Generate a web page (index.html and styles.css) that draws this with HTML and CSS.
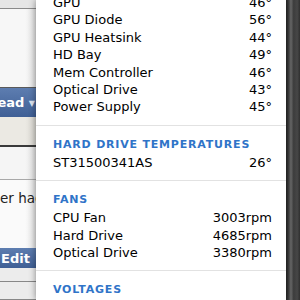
FILE: index.html
```html
<!DOCTYPE html>
<html lang="en">
<head>
    <meta charset="UTF-8">
    <meta name="viewport" content="width=device-width, initial-scale=1.0">
    <title>Temperature Monitor</title>
    <link rel="stylesheet" href="styles.css">
</head>
<body>
    <div class="page">
        <div class="page-top"></div>
        <div class="page-panel"></div>
        <div class="page-btn"><span>Thread <small>▼</small></span></div>
        <div class="page-strip"></div>
        <div class="page-head"></div>
        <div class="page-text">er had</div>
        <div class="page-btn small"><span>Edit</span></div>
        <div class="page-foot"></div>
        <div class="page-foot2"></div>
    </div>

    <div class="menu">
        <div class="menu-scroll">
            <div class="row"><span>GPU</span><span>46°</span></div>
            <div class="row"><span>GPU Diode</span><span>56°</span></div>
            <div class="row"><span>GPU Heatsink</span><span>44°</span></div>
            <div class="row"><span>HD Bay</span><span>49°</span></div>
            <div class="row"><span>Mem Controller</span><span>46°</span></div>
            <div class="row"><span>Optical Drive</span><span>43°</span></div>
            <div class="row"><span>Power Supply</span><span>45°</span></div>

            <div class="sep"></div>
            <div class="section">HARD DRIVE TEMPERATURES</div>
            <div class="row"><span>ST31500341AS</span><span>26°</span></div>

            <div class="sep"></div>
            <div class="section">FANS</div>
            <div class="row"><span>CPU Fan</span><span>3003rpm</span></div>
            <div class="row"><span>Hard Drive</span><span>4685rpm</span></div>
            <div class="row"><span>Optical Drive</span><span>3380rpm</span></div>

            <div class="sep"></div>
            <div class="section">VOLTAGES</div>
            <div class="row"><span>CPU A</span><span>0.98 V</span></div>
        </div>
    </div>

    <div class="desk"></div>
</body>
</html>
```

FILE: styles.css
```css
html, body {
    margin: 0;
    height: 100%;
    overflow: hidden;
}
body {
    display: flex;
    font-family: "DejaVu Sans", sans-serif;
    background: #3a3a3a;
}

/* page behind the menu */
.page {
    width: 36px;
    flex: none;
    display: flex;
    flex-direction: column;
    background: #f3f3f3;
    overflow: hidden;
}
.page-top {
    height: 8px;
    background: #e6e6e6;
    border-bottom: 1px solid #8a8a8a;
}
.page-panel {
    height: 78px;
    background: linear-gradient(to right, #f7f7f7 70%, #e2e2e2);
    border-bottom: 1px solid #5a5a5a;
}
.page-btn {
    height: 29px;
    display: flex;
    align-items: center;
    justify-content: flex-end;
    background: linear-gradient(#5d7db0, #3f5f95);
    color: white;
    font-weight: bold;
    font-size: 13px;
    white-space: nowrap;
    overflow: hidden;
}
.page-btn small {
    font-size: 8px;
    color: #dfe6f2;
    vertical-align: 1px;
}
.page-btn span {
    margin-right: 1px;
}
.page-btn.small {
    height: 20px;
    justify-content: flex-start;
}
.page-btn.small span {
    margin-left: 1px;
}
.page-strip {
    height: 28px;
    background: linear-gradient(to right, #ebe9e3 70%, #d8d6d0);
    border-bottom: 2px solid #3a3a3a;
}
.page-head {
    height: 32px;
    background: linear-gradient(to right, #f5f5f5 70%, #e0e0e0);
    border-bottom: 1px solid #a8a8a8;
}
.page-text {
    height: 68px;
    padding-top: 10px;
    box-sizing: border-box;
    background: linear-gradient(to right, #fafafa 70%, #e4e4e4);
    font-size: 13.5px;
    color: #222;
    white-space: nowrap;
    overflow: hidden;
}
.page-foot {
    height: 13px;
    background: #ececec;
    border-bottom: 1px solid #888;
}
.page-foot2 {
    height: 8px;
    background: #ececec;
    border-bottom: 1px solid #888;
    flex: 1;
}

/* the menu */
.menu {
    width: 250px;
    flex: none;
    background: white;
    box-shadow: 0 0 7px rgba(0, 0, 0, 0.45);
    position: relative;
    z-index: 1;
    overflow: hidden;
}
.menu-scroll {
    margin-top: -6px;
}
.row {
    display: flex;
    justify-content: space-between;
    height: 17.4px;
    line-height: 17.4px;
    padding: 0 14px 0 17px;
    font-size: 13px;
    color: #000;
}
.sep {
    height: 1px;
    background: #e2e2e2;
    margin: 9px 0 8.5px;
}
.section {
    height: 18px;
    line-height: 18px;
    padding: 1.5px 17px 0;
    font-size: 11px;
    font-weight: bold;
    letter-spacing: 0.8px;
    color: #2f74c8;
}

/* dark desktop on the right */
.desk {
    flex: 1;
    background: linear-gradient(to right, #2a2a2a, #3a3a3a 15%, #6a6a6a 35%, #3c3c3c 55%, #474747 80%, #2f2f2f);
}
```
